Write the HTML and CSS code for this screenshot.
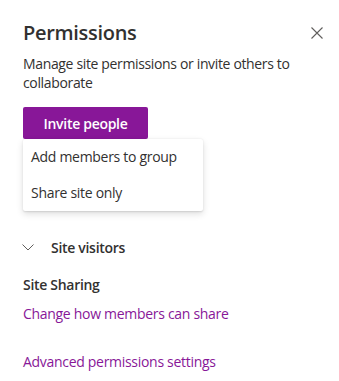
FILE: index.html
```html
<!DOCTYPE html>
<html lang="en">
<head>
    <meta charset="UTF-8">
    <meta name="viewport" content="width=device-width, initial-scale=1.0">
    <title>Permissions</title>
    <link rel="stylesheet" href="styles.css">
</head>
<body>
    <div class="panel">
        <div class="panel-header">
            <h1>Permissions</h1>
            <button class="close-btn" aria-label="Close">
                <svg width="12" height="12" viewBox="0 0 12 12">
                    <path d="M0.5 0.5 L11.5 11.5 M11.5 0.5 L0.5 11.5" stroke="#605e5c" stroke-width="1.1" fill="none"/>
                </svg>
            </button>
        </div>

        <p class="description">Manage site permissions or invite others to collaborate</p>

        <div class="invite">
            <button class="invite-btn">Invite people</button>
            <div class="menu">
                <div class="menu-item">Add members to group</div>
                <div class="menu-item">Share site only</div>
            </div>
        </div>

        <div class="group-row">
            <svg class="chevron" width="12" height="7" viewBox="0 0 12 7">
                <path d="M0.5 0.5 L6 6 L11.5 0.5" stroke="#605e5c" stroke-width="1" fill="none"/>
            </svg>
            <span>Site visitors</span>
        </div>

        <h2>Site Sharing</h2>
        <a class="link" href="#">Change how members can share</a>
        <a class="link advanced" href="#">Advanced permissions settings</a>
    </div>
</body>
</html>
```

FILE: styles.css
```css
* {
    box-sizing: border-box;
}
body {
    margin: 0;
    background-color: #fff;
    font-family: "Open Sans", Arial, sans-serif;
    color: #323130;
}
.panel {
    width: 339px;
    height: 381px;
    padding: 19px 16px 0 23px;
    display: flex;
    flex-direction: column;
    align-items: flex-start;
}
.panel-header {
    width: 100%;
    display: flex;
    justify-content: space-between;
    align-items: center;
}
h1 {
    margin: 0;
    font-size: 20px;
    line-height: 28px;
    font-weight: 600;
    letter-spacing: -0.3px;
}
.close-btn {
    border: none;
    background: none;
    padding: 0;
    width: 12px;
    height: 12px;
    display: flex;
}
.description {
    margin: 7px 0 0;
    font-size: 14px;
    line-height: 19px;
    letter-spacing: -0.35px;
    width: 280px;
}
.invite {
    margin-top: 15px;
    display: flex;
    flex-direction: column;
}
.invite-btn {
    width: 125px;
    height: 32px;
    border: none;
    border-radius: 2px;
    background-color: #881798;
    color: #fff;
    font-family: inherit;
    font-size: 14px;
    font-weight: 600;
    letter-spacing: -0.3px;
    padding: 0;
}
.menu {
    width: 180px;
    background-color: #fff;
    border-radius: 2px;
    box-shadow: 0 3px 7px rgba(0, 0, 0, 0.13), 0 0.6px 1.8px rgba(0, 0, 0, 0.11);
}
.menu-item {
    height: 36px;
    line-height: 36px;
    padding-left: 8px;
    font-size: 14px;
    letter-spacing: -0.3px;
}
.group-row {
    margin-top: 14px;
    height: 44px;
    display: flex;
    align-items: center;
    font-size: 14px;
    font-weight: 600;
    letter-spacing: -0.3px;
    margin-left: -1px;
}
.chevron {
    margin-right: 17px;
    margin-top: 1px;
}
h2 {
    margin: 6px 0 0;
    font-size: 14px;
    line-height: 20px;
    font-weight: 600;
    letter-spacing: -0.3px;
}
.link {
    margin-top: 9px;
    font-size: 14px;
    line-height: 20px;
    color: #881798;
    text-decoration: none;
    letter-spacing: -0.3px;
}
.advanced {
    margin-top: 28px;
}
```
